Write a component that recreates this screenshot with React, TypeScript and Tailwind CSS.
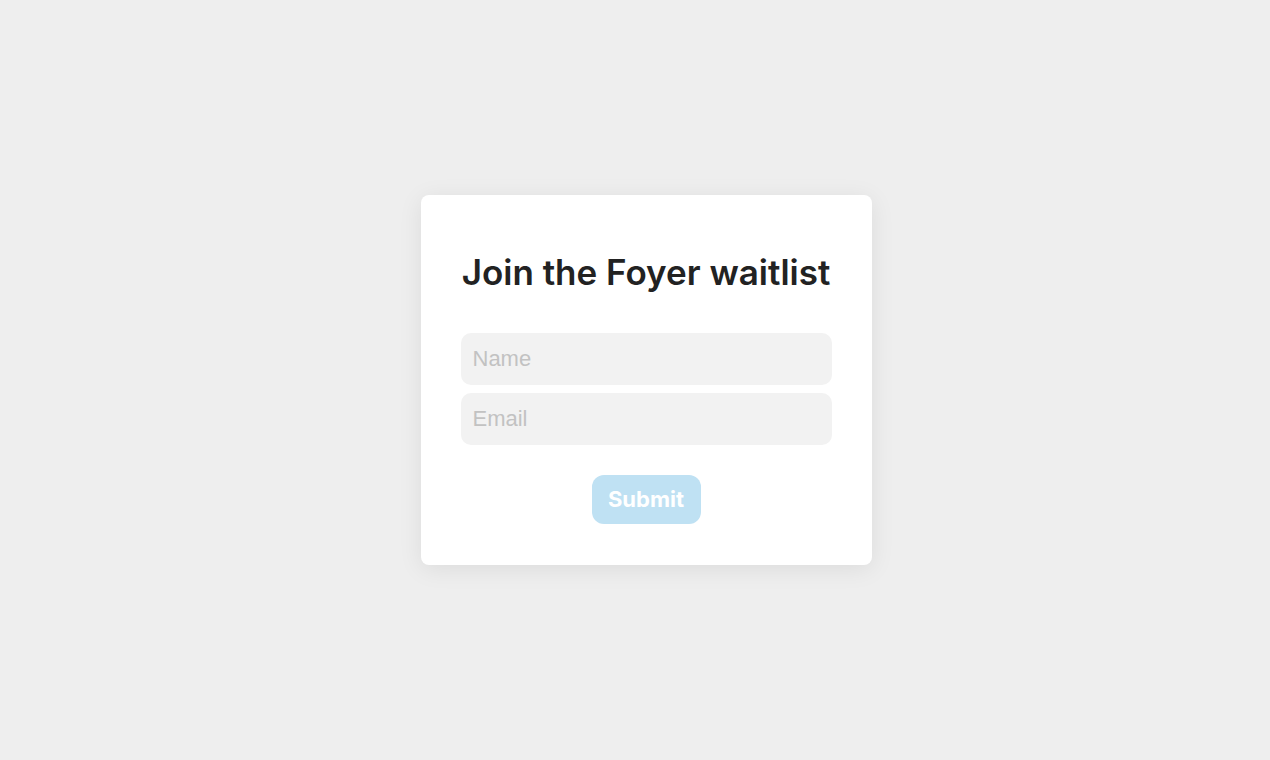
export default function App() {
  return (
    <div className="min-h-screen w-full bg-[#eeeeee] flex items-center justify-center pl-[22px]">
      <div className="w-[451px] h-[370px] bg-white rounded-[8px] shadow-[0_4px_24px_rgba(0,0,0,0.08)] px-10 pt-[52px] flex flex-col">
        <h1
          className="text-[35px] leading-[50px] font-semibold text-[#222222] text-center whitespace-nowrap"
          style={{ fontFamily: 'Inter, sans-serif' }}
        >
          Join the Foyer waitlist
        </h1>
        <form className="mt-[36px] flex flex-col gap-2" onSubmit={e => e.preventDefault()}>
          <input
            type="text"
            placeholder="Name"
            className="h-[52px] w-full rounded-[10px] bg-[#f2f2f2] px-3 text-[22px] text-[#333] placeholder:text-[#c2c2c2] outline-none"
            style={{ fontFamily: '"Liberation Sans", Arial, sans-serif' }}
          />
          <input
            type="email"
            placeholder="Email"
            className="h-[52px] w-full rounded-[10px] bg-[#f2f2f2] px-3 text-[22px] text-[#333] placeholder:text-[#c2c2c2] outline-none"
            style={{ fontFamily: '"Liberation Sans", Arial, sans-serif' }}
          />
          <div className="mt-[22px] flex justify-center">
            <button
              type="submit"
              className="w-[109px] h-[49px] rounded-[12px] bg-[#bfe1f3] text-white text-[22px] font-bold"
              style={{ fontFamily: 'Inter, sans-serif' }}
            >
              Submit
            </button>
          </div>
        </form>
      </div>
    </div>
  )
}
